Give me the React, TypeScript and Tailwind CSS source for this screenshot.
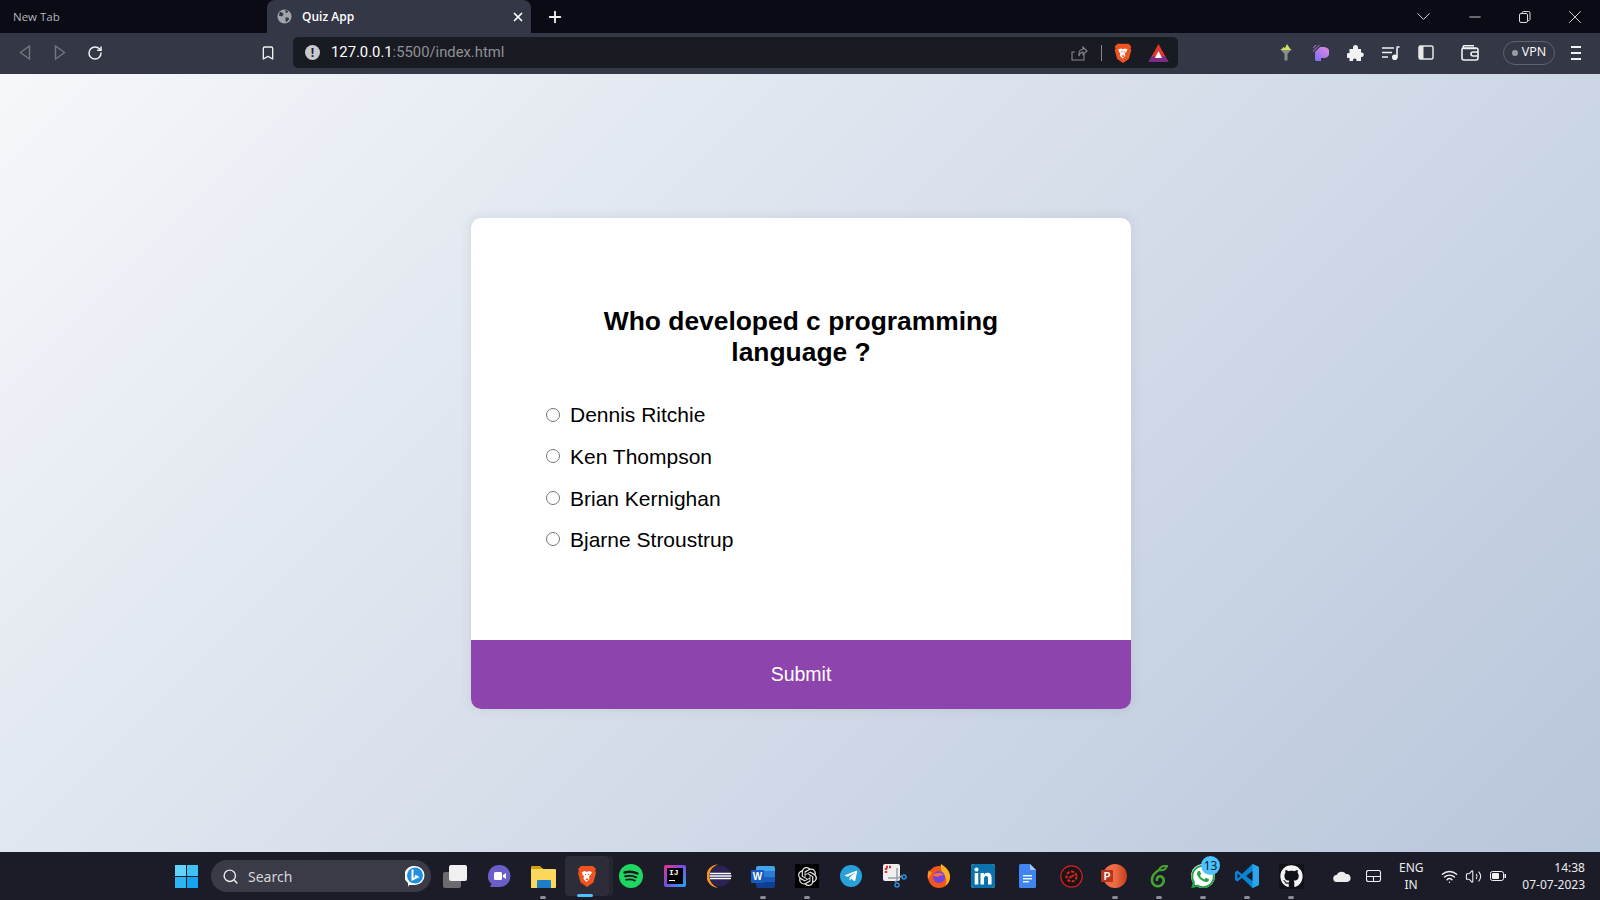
import { Bookmark, ChevronDown, Minus, Plus, RotateCw, Search, Volume2, Wifi, X } from "lucide-react";
import type { ReactNode } from "react";
import { FaGithub, FaLinkedin, FaTelegramPlane, FaWhatsapp } from "react-icons/fa";
import { SiOpenai } from "react-icons/si";

const OPTIONS = ["Dennis Ritchie", "Ken Thompson", "Brian Kernighan", "Bjarne Stroustrup"];

function BraveIcon({ size = 24 }: { size?: number }) {
  return (
    <svg width={size} height={size} viewBox="0 0 24 24">
      <path d="M6 2h12l3 3-.8 2 .8 2-2.600 9.500L12 23l-6.400-4.500L3 9l.8-2L3 5z" fill="#f1531f" />
      <path d="M7 8l3-1 2 1 2-1 3 1-1.500 3-1.500 1 .5 3-3 3-3-3 .5-3-1.500-1z" fill="#fff" />
      <path d="M10 10.500h1.200M12.800 10.500H14M11 15h2l-1 1.200z" stroke="#f1531f" strokeWidth="1" fill="#f1531f" />
    </svg>
  );
}

function ToolSlot({ children }: { children: ReactNode }) {
  return <div className="flex h-full w-[35px] shrink-0 items-center justify-center">{children}</div>;
}

function ExtensionIcons() {
  return (
    <div className="ml-[90px] flex h-full items-center">
      <ToolSlot>
        <svg width="14" height="17" viewBox="0 0 14 17">
          <path d="M1 5h12L8.500 10v6.500h-3V10z" fill="#8a8f86" />
          <path d="M2 6l2.500-3L6 4l2-4 2 3 2 3z" fill="#cfe05a" />
        </svg>
      </ToolSlot>
      <ToolSlot>
        <svg width="16" height="16" viewBox="0 0 16 16">
          <defs>
            <linearGradient id="ext-grad" x1="0" y1="1" x2="1" y2="0">
              <stop offset="0" stopColor="#7a6cf5" />
              <stop offset="1" stopColor="#e88ae0" />
            </linearGradient>
          </defs>
          <path d="M7 2h4a5.500 5.500 0 0 1 0 11H8v3H3.500a1.500 1.500 0 0 1-1.500-1.500V7z" fill="url(#ext-grad)" />
          <path d="M0 2.500L2.500 0h1L0 3.500zM0 6l6-6h.8L0 7z" fill="#d088f0" />
        </svg>
      </ToolSlot>
      <ToolSlot>
        <svg width="17" height="16" viewBox="0 0 17 16" fill="#f2f2f2">
          <path d="M6 2.500a2.500 2.500 0 0 1 5 0V4h3v3.500h.5a2.300 2.300 0 0 1 0 4.600H14V16H9.500v-1a1.800 1.800 0 0 0-3.500 0v1H2.500v-3H1.800a2.500 2.500 0 0 1 0-5H2.500V4H6z" />
        </svg>
      </ToolSlot>
      <ToolSlot>
        <svg width="18" height="14" viewBox="0 0 18 14" fill="none" stroke="#f2f2f2" strokeWidth="1.600">
          <path d="M0 2h12M0 6.500h10M0 11h6" />
          <path d="M15 1.500v10" />
          <circle cx="12.800" cy="11.200" r="2" fill="#f2f2f2" />
          <path d="M14.500 1h3" />
        </svg>
      </ToolSlot>
      <ToolSlot>
        <svg width="16" height="15" viewBox="0 0 16 15">
          <rect x="1" y="1" width="14" height="13" rx="1.500" fill="none" stroke="#e8e8e8" strokeWidth="1.500" />
          <rect x="1" y="1" width="4.500" height="13" fill="#e8e8e8" />
        </svg>
      </ToolSlot>
    </div>
  );
}

function TabBar() {
  return (
    <div className="flex h-[33px] shrink-0 items-center bg-[#0a0b14]">
      <div className="w-[267px] pl-[13px] text-[11.5px] text-[#b5b6bb]">New Tab</div>
      <div className="flex h-full w-[264px] items-center rounded-t-[8px] bg-[#343746] pl-[10px] pr-[6px] text-white">
        <svg width="15" height="15" viewBox="0 0 16 16" className="shrink-0">
          <circle cx="8" cy="8" r="7.500" fill="#a2a4ac" />
          <path d="M3 3l3 1 1 2-2 2-3-1zM9 9l3 0 1 2-3 3-1-2zM9 1l3 1-1 2-2 0z" fill="#343746" />
        </svg>
        <span className="ml-[10px] text-[12px] font-semibold">Quiz App</span>
        <X size={14} strokeWidth={3} className="ml-auto" />
      </div>
      <Plus size={18} strokeWidth={2.5} color="#f0f0f0" className="ml-[15px]" />
      <div className="ml-auto flex items-center text-[#dcdcdc]">
        <ChevronDown size={23} strokeWidth={1} />
        <Minus size={18} strokeWidth={1.2} className="ml-[31px]" />
        <svg width="12" height="12" viewBox="0 0 12 12" className="ml-[35px]" fill="none" stroke="#dcdcdc">
          <rect x=".5" y="2.500" width="8" height="9" rx="1.500" />
          <path d="M3 2.500V2A1.500 1.500 0 0 1 4.500.5h5A1.500 1.500 0 0 1 11 2v6a1.500 1.500 0 0 1-2 1.500" />
        </svg>
        <X size={22} strokeWidth={1} className="ml-[33px] mr-[14px]" />
      </div>
    </div>
  );
}

function ToolBar() {
  return (
    <div className="flex h-[41px] shrink-0 items-center bg-[#343746] pb-[2px] pl-[7px]">
      <ToolSlot>
        <svg width="12" height="15" viewBox="0 0 12 15" fill="none" stroke="#747782" strokeWidth="1.400"><path d="M10.500 1v13L1.500 7.500z" /></svg>
      </ToolSlot>
      <ToolSlot>
        <svg width="12" height="15" viewBox="0 0 12 15" fill="none" stroke="#747782" strokeWidth="1.400"><path d="M1.500 1v13l9-6.500z" /></svg>
      </ToolSlot>
      <ToolSlot>
        <RotateCw size={16} strokeWidth={2.2} color="#f2f2f2" />
      </ToolSlot>
      <div className="ml-[138px] h-full">
        <ToolSlot>
          <Bookmark size={16} strokeWidth={2} color="#f2f2f2" />
        </ToolSlot>
      </div>
      <div className="ml-[8px] flex h-[31px] w-[885px] shrink-0 items-center rounded-[5px] bg-[#191b22] pl-[12px]">
        <div className="flex h-[15px] w-[15px] items-center justify-center rounded-full bg-[#c8c9cd] text-[12px] font-bold text-[#191b22]">!</div>
        <div className="ml-[11px] font-['Roboto',sans-serif] text-[14.8px] text-[#8f9096]">
          <span className="text-white">127.0.0.1</span>:5500/index.html
        </div>
        <svg width="18" height="18" viewBox="0 0 18 18" fill="none" stroke="#85878f" strokeWidth="1.100" className="ml-auto">
          <path d="M14 10v6H2V8h3M9 12V9c0-2 2-3.500 4-3.500V3l4 4-4 3.500V8c-2 0-3 1-4 4z" />
        </svg>
        <div className="ml-[13px] h-[16px] w-px bg-[#85878f]" />
        <div className="ml-[10px]"><BraveIcon size={22} /></div>
        <svg width="21" height="20" viewBox="0 0 21 20" className="ml-[14px] mr-[9px]">
          <path d="M10.500 1L20.500 19H.5z" fill="#e5352d" />
          <path d="M.5 19l3-5.500h14l3 5.500z" fill="#7a2a88" />
          <path d="M10.500 8l3.500 7H7z" fill="#fff" />
        </svg>
      </div>
      <ExtensionIcons />
      <div className="ml-[18px]">
        <svg width="18" height="16" viewBox="0 0 18 16" fill="none" stroke="#f2f2f2" strokeWidth="1.600">
          <path d="M15 3.500H3A1.500 1.500 0 0 1 3 .8h10" />
          <rect x="1" y="3" width="16" height="12" rx="2" />
          <path d="M17 7h-5a2 2 0 0 0 0 4h5" />
        </svg>
      </div>
      <div className="ml-[24px] flex h-[24px] w-[52px] items-center justify-center rounded-full border border-[#5f626f] text-[12.5px] text-white">
        <div className="mr-[4px] h-[6px] w-[6px] rounded-full bg-[#9a9ca5]" />
        VPN
      </div>
      <div className="ml-[16px] flex w-[10px] flex-col gap-[4px]">
        <div className="h-[2px] bg-[#f2f2f2]" />
        <div className="h-[2px] bg-[#f2f2f2]" />
        <div className="h-[2px] bg-[#f2f2f2]" />
      </div>
    </div>
  );
}

function QuizCard() {
  return (
    <div className="w-[660px] overflow-hidden rounded-[10px] bg-white shadow-[0_0_10px_2px_rgba(100,100,100,0.1)]">
      <div className="pb-[80.2px] pl-[75px] pr-[77px] pt-[88px]">
        <h2 className="pl-[31px] pr-[29px] text-center text-[26.4px] font-bold leading-[31px] text-black">
          Who developed c programming language ?
        </h2>
        <ul className="mt-[25.4px] text-[21px]">
          {OPTIONS.map(option => (
            <li key={option} className="flex h-[41.6px] items-center text-black">
              <input type="radio" name="answer" className="m-0 mt-[1px] h-[14px] w-[14px]" />
              <label className="ml-[10px] pt-[2px]">{option}</label>
            </li>
          ))}
        </ul>
      </div>
      <button className="block h-[69px] w-full bg-[#8e44ad] pt-[1px] text-[19.5px] text-white">Submit</button>
    </div>
  );
}

function TaskIcon({ children, dot, active }: { children: ReactNode; dot?: boolean; active?: boolean }) {
  return (
    <div className={active ? "relative flex h-[40px] w-[44px] shrink-0 items-center justify-center rounded-[4px] bg-[#2c2d39]" : "relative flex h-[40px] w-[44px] shrink-0 items-center justify-center"}>
      {children}
      {dot && <div className="absolute bottom-[-3px] left-[19px] h-[3px] w-[6px] rounded-full bg-[#8b8c92]" />}
      {active && <div className="absolute bottom-[-1px] left-[12px] h-[3px] w-[16px] rounded-full bg-[#4cc2ff]" />}
    </div>
  );
}

function TaskBar() {
  return (
    <div className="flex h-[48px] shrink-0 items-center bg-[#1c1c29] pl-[164px] text-white">
      <TaskIcon>
        <div className="grid h-[23px] w-[23px] grid-cols-2 gap-[1px]">
          <div className="bg-[#62d4fb]" />
          <div className="bg-[#3dc1f7]" />
          <div className="bg-[#2cb4f5]" />
          <div className="bg-[#14a3ee]" />
        </div>
      </TaskIcon>
      <div className="ml-[3px] flex h-[32px] w-[220px] shrink-0 items-center rounded-full bg-[#3a3b47] pl-[11px] pr-[6px]">
        <Search size={17} color="#e8e8e8" />
        <span className="ml-[9px] font-['Noto_Sans',sans-serif] text-[14px] text-[#d6d6d8]">Search</span>
        <svg width="20" height="22" viewBox="0 0 20 22" className="ml-auto">
          <path d="M10 1a9.500 9.500 0 0 1 0 19H4l-1 2v-4A9.500 9.500 0 0 1 10 1z" fill="#fff" />
          <circle cx="10" cy="10.500" r="8" fill="#1f8fe0" />
          <path d="M7.500 4.500v10l5-2.500-2.500-1.500" fill="none" stroke="#fff" strokeWidth="2" />
        </svg>
      </div>
      <div className="ml-[2px] flex items-center">
        <TaskIcon>
          <div className="relative h-[23px] w-[24px]">
            <div className="absolute bottom-0 left-0 h-[16px] w-[18px] rounded-[2px] bg-[#6b6b70]" />
            <div className="absolute right-0 top-0 h-[16px] w-[18px] rounded-[2px] bg-[#f0f0f0]" />
          </div>
        </TaskIcon>
        <TaskIcon>
          <svg width="24" height="24" viewBox="0 0 24 24">
            <path d="M12.500 1a11 11 0 1 1 0 22H3l1.500-3A11 11 0 0 1 12.500 1z" fill="#6a5fc8" />
            <rect x="7" y="8" width="8" height="8" rx="1.500" fill="#fff" />
            <path d="M16 11l3-2v6l-3-2z" fill="#fff" />
          </svg>
        </TaskIcon>
        <TaskIcon dot>
          <svg width="25" height="23" viewBox="0 0 25 23">
            <path d="M0 2a1 1 0 0 1 1-1h8l2 2h1v20H0z" fill="#d99a14" />
            <path d="M0 4h24a1 1 0 0 1 1 1v17a1 1 0 0 1-1 1H1a1 1 0 0 1-1-1z" fill="#fbd75b" />
            <path d="M7 15h12a1 1 0 0 1 1 1v7H6v-7a1 1 0 0 1 1-1z" fill="#1d7fc9" />
          </svg>
        </TaskIcon>
        <TaskIcon active>
          <BraveIcon />
          <div className="absolute right-[-4px] top-0 h-[40px] w-[4px] rounded-r-[4px] bg-[#25262f]" />
        </TaskIcon>
        <TaskIcon>
          <svg width="24" height="24" viewBox="0 0 24 24" fill="none" stroke="#17171f" strokeLinecap="round">
            <circle cx="12" cy="12" r="12" fill="#1ed760" stroke="none" />
            <path d="M5.500 8.500c4.500-1.300 9-1 13 1" strokeWidth="2.400" />
            <path d="M6.200 12.300c4-1 7.800-.7 11 1" strokeWidth="2" />
            <path d="M7 15.800c3.300-.8 6.200-.6 9 .9" strokeWidth="1.600" />
          </svg>
        </TaskIcon>
        <TaskIcon>
          <div className="h-[22px] w-[22px] rounded-[2px] bg-[linear-gradient(135deg,#f0308a,#7b4ce0_45%,#20a8f0)] p-[3px]">
            <div className="flex h-full w-full flex-col bg-black px-[2px] font-['Liberation_Mono',monospace] text-[8px] font-bold leading-[9px] text-white">
              IJ
              <div className="mt-[3px] h-[1px] w-[6px] bg-white" />
            </div>
          </div>
        </TaskIcon>
        <TaskIcon>
          <svg width="25" height="24" viewBox="0 0 25 24">
            <path d="M11 .5A11.500 11.500 0 0 0 11 23.500 12 12 0 0 1 11 .5z" fill="#f7941e" />
            <circle cx="13" cy="12" r="10.500" fill="#2c2255" />
            <path d="M3 9.500h21M2.500 12h22M3 14.500h21" stroke="#fff" strokeWidth="1.300" />
          </svg>
        </TaskIcon>
        <TaskIcon dot>
          <div className="relative h-[23px] w-[24px]">
            <div className="absolute bottom-0 right-0 flex h-[22px] w-[19px] flex-col overflow-hidden rounded-[2px]">
              <div className="flex-1 bg-[#41a5ee]" />
              <div className="flex-1 bg-[#2b7cd3]" />
              <div className="flex-1 bg-[#185abd]" />
              <div className="flex-1 bg-[#103f91]" />
            </div>
            <div className="absolute left-0 top-[5px] flex h-[13px] w-[13px] items-center justify-center rounded-[1px] bg-[#185abd] font-['Liberation_Sans',sans-serif] text-[10px] font-bold text-white">W</div>
          </div>
        </TaskIcon>
        <TaskIcon dot>
          <div className="flex h-[24px] w-[24px] items-center justify-center bg-black">
            <SiOpenai size={19} color="#e4e4e4" />
          </div>
        </TaskIcon>
        <TaskIcon>
          <div className="flex h-[22px] w-[22px] items-center justify-center rounded-full bg-[#2aa0d8]">
            <FaTelegramPlane size={14} color="#fff" />
          </div>
        </TaskIcon>
        <TaskIcon>
          <svg width="25" height="24" viewBox="0 0 25 24" fill="none">
            <rect x="0" y="0" width="17" height="17" rx="2" fill="#efefef" />
            <path d="M3 9V3h6" stroke="#d33a2c" strokeWidth="2.500" strokeDasharray="2 1" />
            <path d="M14 4v12L12 18M5 14h10l4 -2" stroke="#9aa0a6" strokeWidth="1.500" />
            <circle cx="21" cy="13" r="2" stroke="#1e90e0" strokeWidth="1.500" />
            <circle cx="14" cy="21" r="2" stroke="#1e90e0" strokeWidth="1.500" />
          </svg>
        </TaskIcon>
        <TaskIcon>
          <svg width="24" height="24" viewBox="0 0 24 24">
            <circle cx="12" cy="13" r="11" fill="#f2561d" />
            <path d="M14 0c5 3 9 7 9 13 0 4-2 7-5 9 2-4 2-8-1-11-2-3-4-6-3-11z" fill="#ffb01f" />
            <path d="M2 6c0 0 1 2 3 3l-4 6C0 12 1 8 2 6z" fill="#ff9520" />
            <circle cx="12" cy="13" r="6" fill="#7542e5" />
            <path d="M6 11c3-2 7-3 11 0-3 0-4 1-5 1-2 1-4 1-6-1z" fill="#ff7139" />
          </svg>
        </TaskIcon>
        <TaskIcon>
          <div className="flex h-[24px] w-[24px] items-center justify-center overflow-hidden rounded-[3px] bg-white">
            <FaLinkedin size={28} color="#0a72ad" />
          </div>
        </TaskIcon>
        <TaskIcon>
          <svg width="17" height="24" viewBox="0 0 17 24">
            <path d="M1.500 0H11l6 6v16.500a1.500 1.500 0 0 1-1.500 1.500h-14A1.500 1.500 0 0 1 0 22.500v-21A1.500 1.500 0 0 1 1.500 0z" fill="#3f84f0" />
            <path d="M11 0l6 6h-6z" fill="#a6c5fa" />
            <path d="M4 11h9v1.500H4zM4 14h9v1.500H4zM4 17h6v1.500H4z" fill="#e6effd" />
          </svg>
        </TaskIcon>
        <TaskIcon>
          <svg width="23" height="23" viewBox="0 0 23 23" fill="none">
            <circle cx="11.500" cy="11.500" r="10.700" fill="#1c1414" stroke="#d32020" strokeWidth="1.200" />
            <circle cx="11.500" cy="11.500" r="5" stroke="#e02525" strokeWidth="2" strokeDasharray="3 1.500" />
            <path d="M9 13l5-3" stroke="#e02525" strokeWidth="2" />
          </svg>
        </TaskIcon>
        <TaskIcon dot>
          <div className="relative h-[24px] w-[24px]">
            <div className="absolute right-0 top-0 h-[24px] w-[24px] rounded-full bg-[linear-gradient(90deg,#ed6c47_50%,#c43e1c)]" />
            <div className="absolute left-[-2px] top-[6px] flex h-[12px] w-[12px] items-center justify-center rounded-[1px] bg-[#b7361a] font-['Liberation_Sans',sans-serif] text-[10px] font-bold text-white">P</div>
          </div>
        </TaskIcon>
        <TaskIcon dot>
          <svg width="19" height="25" viewBox="0 0 19 25" fill="none" stroke="#46a332" strokeWidth="2.600" strokeLinecap="round">
            <path d="M9 6C4 9 1.500 13 2 17c.5 4 4 6 7.500 5 4-1 5-5.500 3.500-8-2-3-6.500-1.500-6 2" />
            <path d="M9 6c1-3 4-4.500 8-4-1 3-3.500 5-8 4z" strokeWidth="2" />
          </svg>
        </TaskIcon>
        <TaskIcon dot>
          <div className="relative flex h-[24px] w-[24px] items-center justify-center rounded-full bg-white">
            <FaWhatsapp size={27} color="#25a244" />
            <div className="absolute left-[10px] top-[-8px] flex h-[19px] w-[19px] items-center justify-center rounded-full bg-[#4cc2ff] font-['Noto_Sans',sans-serif] text-[12px] text-[#10202c]">13</div>
          </div>
        </TaskIcon>
        <TaskIcon dot>
          <svg width="24" height="24" viewBox="0 0 24 24">
            <path d="M17.500 0L24 3v18l-6.500 3L7 14l-4.500 3.500L0 16V8l2.500-1.500L7 10z" fill="#0a84d0" />
            <path d="M17.500 0L24 3v18l-6.500 3z" fill="#2ba5ec" />
            <path d="M17.500 7l-6.500 5 6.500 5z" fill="#1c1c29" />
            <path d="M2.500 9.500v5L5.500 12z" fill="#1c1c29" />
          </svg>
        </TaskIcon>
        <TaskIcon dot>
          <div className="flex h-[25px] w-[25px] items-center justify-center rounded-[2px] bg-[#111118]">
            <FaGithub size={23} color="#f4f4f4" />
          </div>
        </TaskIcon>
      </div>
      <div className="ml-[20px] flex items-center">
        <svg width="18" height="11" viewBox="0 0 18 11" fill="#ececec">
          <path d="M4 11a3.500 3.500 0 0 1-.5-7A5.500 5.500 0 0 1 13 3a4 4 0 0 1 1 8z" />
        </svg>
        <svg width="16" height="12" viewBox="0 0 16 12" fill="none" stroke="#f0f0f0" strokeWidth="1.100" className="ml-[15px]">
          <rect x=".5" y=".5" width="14" height="11" rx="2" />
          <path d="M.5 6.500h14M7.500 6.500v5" />
        </svg>
        <div className="ml-[17px] w-[24px] text-center font-['Noto_Sans',sans-serif] text-[12px] leading-[17px] text-[#ececec]">
          ENG
          <br />
          IN
        </div>
        <Wifi size={17} color="#f0f0f0" className="ml-[18px]" />
        <Volume2 size={17} color="#f0f0f0" strokeWidth={1.5} className="ml-[7px]" />
        <svg width="16" height="10" viewBox="0 0 16 10" fill="none" className="ml-[8px]">
          <rect x=".5" y=".5" width="13" height="9" rx="2" stroke="#f0f0f0" />
          <rect x="2" y="2" width="7" height="6" rx="1" fill="#f0f0f0" />
          <rect x="14.500" y="3" width="1.500" height="4" fill="#f0f0f0" />
        </svg>
      </div>
      <div className="ml-auto mr-[15px] text-right font-['Noto_Sans',sans-serif] text-[12px] leading-[17px] text-[#ececec]">
        14:38
        <br />
        07-07-2023
      </div>
    </div>
  );
}

export default function App() {
  return (
    <div className="flex h-screen w-full flex-col overflow-hidden font-['Open_Sans',sans-serif]">
      <TabBar />
      <ToolBar />
      <div className="flex flex-1 items-center justify-center bg-[linear-gradient(315deg,#b8c6db_0%,#f5f7fa_100%)] pl-[2px] pt-[1px] font-['Liberation_Sans',sans-serif]">
        <QuizCard />
      </div>
      <TaskBar />
    </div>
  );
}
